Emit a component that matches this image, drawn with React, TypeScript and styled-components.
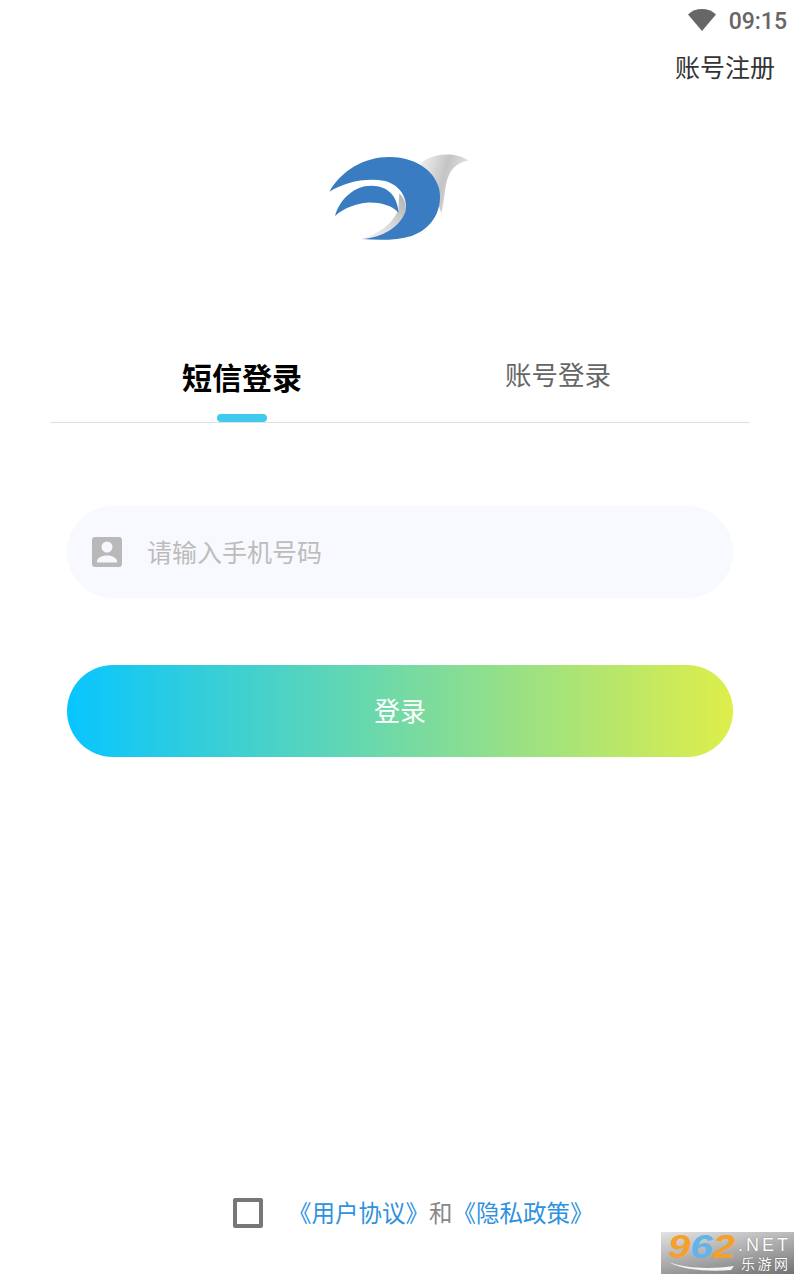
import React from "react"
import styled, { createGlobalStyle } from "styled-components"

const GlobalStyle = createGlobalStyle`
	html, body {
		margin: 0;
		padding: 0;
		background: #fff;
	}
	body {
		font-family: "Noto Sans CJK SC", "Noto Sans", sans-serif;
	}
`

const App = () => {
	return (
		<Page>
			<GlobalStyle />
			<StatusBar>
				<svg width="30" height="24" viewBox="0 0 30 24">
					<path d="M1 6.500C5 2.800 9.800 1 15 1s10 1.800 14 5.500L15 23z" fill="#666" />
				</svg>
				<Clock>09:15</Clock>
			</StatusBar>
			<TopAction>
				<RegisterLink>账号注册</RegisterLink>
			</TopAction>
			<LogoRow>
				<svg width="200" height="130" viewBox="0 0 600 390">
					<defs>
						<linearGradient id="wing" x1="0" y1="0" x2="1" y2="0.35">
							<stop offset="0" stopColor="#f2f2f2" />
							<stop offset="0.55" stopColor="#c4c4c4" />
							<stop offset="1" stopColor="#e8e8e8" />
						</linearGradient>
						<linearGradient id="fold" x1="1" y1="0" x2="0" y2="1">
							<stop offset="0" stopColor="#b0b0b0" />
							<stop offset="0.5" stopColor="#d8d8d8" />
							<stop offset="1" stopColor="#f4f4f4" />
						</linearGradient>
					</defs>
					<path d="M362 100C395 72 460 62 506 92C470 96 447 118 438 165C432 200 430 225 424 250L400 180z" fill="url(#wing)" />
					<path d="M298 190C325 215 322 260 296 288C265 318 225 328 185 327C235 312 275 285 295 240z" fill="url(#fold)" />
					<path d="M88 185C125 120 195 80 270 81C340 82 400 115 417 175C430 235 400 295 335 318C290 332 235 331 185 327C250 322 300 290 316 245C325 205 300 165 255 153C195 142 135 157 88 185z" fill="#3a7cc1" />
					<path d="M105 258C120 205 165 166 215 167C262 168 292 195 296 248C275 225 235 216 200 218C165 221 130 235 105 258z" fill="#3a7cc1" />
				</svg>
			</LogoRow>
			<Tabs>
				<Tab $active>
					短信登录
					<TabMarker />
				</Tab>
				<Tab>账号登录</Tab>
			</Tabs>
			<Form>
				<PhoneField>
					<svg width="30" height="30" viewBox="0 0 30 30">
						<rect width="30" height="30" rx="3" fill="#b9b9b9" />
						<circle cx="15" cy="10" r="5.500" fill="#f7f8fd" />
						<path d="M5 25.500V24c0-3.500 6-5.500 10-5.500s10 2 10 5.500v1.500z" fill="#f7f8fd" />
					</svg>
					<PhoneInput placeholder="请输入手机号码" />
				</PhoneField>
				<LoginButton>登录</LoginButton>
			</Form>
			<Agreement>
				<CheckBox />
				<AgreementText>
					<AgreementLink>《用户协议》</AgreementLink>和<AgreementLink>《隐私政策》</AgreementLink>
				</AgreementText>
			</Agreement>
			<Watermark>
				<WatermarkBrand>
					<WatermarkDigits>
						<WatermarkDigit>9</WatermarkDigit>
						<WatermarkDigit $blue>6</WatermarkDigit>
						<WatermarkDigit>2</WatermarkDigit>
					</WatermarkDigits>
					<svg width="70" height="10" viewBox="0 0 70 10">
						<path d="M1 1C18 8 45 8 66 5l-3 4C42 11 14 9 1 1z" fill="#f4f4f4" />
					</svg>
				</WatermarkBrand>
				<WatermarkSide>
					<WatermarkNet>.NET</WatermarkNet>
					<WatermarkName>乐游网</WatermarkName>
				</WatermarkSide>
			</Watermark>
		</Page>
	)
}

export default App

const Page = styled.div`
	position: relative;
	width: 800px;
	height: 1280px;
	overflow: hidden;
	background: #fff;
`

const StatusBar = styled.div`
	display: flex;
	justify-content: flex-end;
	align-items: center;
	gap: 12px;
	height: 40px;
	padding-right: 13px;
	color: #666;
`

const Clock = styled.span`
	margin-top: 3px;
	font-family: Roboto, sans-serif;
	font-size: 23px;
	font-weight: 500;
	line-height: 37px;
`

const TopAction = styled.div`
	display: flex;
	justify-content: flex-end;
	height: 56px;
	padding-right: 25px;
`

const RegisterLink = styled.span`
	font-size: 25px;
	line-height: 52px;
	color: #333;
`

const LogoRow = styled.div`
	display: flex;
	justify-content: center;
	height: 254px;
	padding-top: 34px;
	box-sizing: border-box;
`

const Tabs = styled.div`
	display: grid;
	grid-template-columns: 384px 248px;
	height: 72px;
	margin: 0 50px;
	border-bottom: 1px solid #e0e0e0;
`

const Tab = styled.div<{ $active?: boolean }>`
	position: relative;
	justify-self: center;
	font-size: ${({ $active }) => ($active ? 30 : 26.5)}px;
	font-weight: ${({ $active }) => ($active ? 700 : 400)};
	line-height: ${({ $active }) => ($active ? 52 : 48)}px;
	color: ${({ $active }) => ($active ? "#000" : "#666")};
`

const TabMarker = styled.div`
	position: absolute;
	left: 35px;
	bottom: 0;
	width: 50px;
	height: 8px;
	border-radius: 4px;
	background: #3fcbee;
`

const Form = styled.div`
	display: flex;
	flex-direction: column;
	gap: 67px;
	margin: 83px 67px 0;
`

const PhoneField = styled.div`
	display: flex;
	align-items: center;
	gap: 25px;
	height: 92px;
	padding-left: 25px;
	border-radius: 46px;
	background: #f8f9fe;
`

const PhoneInput = styled.input`
	flex: 1;
	min-width: 0;
	border: 0;
	outline: 0;
	padding: 0 0 3px;
	background: transparent;
	font-family: inherit;
	font-size: 25px;
	color: #333;

	&::placeholder {
		color: #bcbcbc;
		opacity: 1;
	}
`

const LoginButton = styled.div`
	display: flex;
	justify-content: center;
	align-items: center;
	height: 92px;
	padding-bottom: 4px;
	box-sizing: border-box;
	border-radius: 46px;
	background: linear-gradient(90deg, #08c5ff 0%, #deee4a 100%);
	font-size: 26px;
	color: #fff;
`

const Agreement = styled.div`
	position: absolute;
	left: 233px;
	top: 1198px;
	display: flex;
	align-items: center;
	gap: 25px;
`

const CheckBox = styled.div`
	width: 30px;
	height: 30px;
	box-sizing: border-box;
	border: 4px solid #777;
	border-radius: 2px;
`

const AgreementText = styled.div`
	margin-top: -2px;
	font-size: 23.5px;
	line-height: 30px;
	color: #888;
	white-space: nowrap;
`

const AgreementLink = styled.span`
	color: #2f92e0;
`

const Watermark = styled.div`
	position: absolute;
	left: 661px;
	top: 1232px;
	display: flex;
	width: 133px;
	height: 42px;
	padding-left: 7px;
	box-sizing: border-box;
	background: linear-gradient(170deg, #e2e2e2 0%, #a6a6a6 55%, #727272 100%);
`

const WatermarkBrand = styled.div`
	display: flex;
	flex-direction: column;
	width: 72px;

	svg {
		margin-top: 1px;
	}
`

const WatermarkDigits = styled.div`
	display: flex;
	height: 28px;
	transform: scaleX(1.18);
	transform-origin: left;
	font-family: "Liberation Sans", sans-serif;
	font-size: 34px;
	font-weight: 700;
	font-style: italic;
	line-height: 28px;
`

const WatermarkDigit = styled.span<{ $blue?: boolean }>`
	color: ${({ $blue }) => ($blue ? "#62b3e8" : "#f59f2c")};
`

const WatermarkSide = styled.div`
	display: flex;
	flex-direction: column;
	align-items: flex-start;
	padding-top: 3px;
`

const WatermarkNet = styled.div`
	margin-left: -2px;
	font-family: "Liberation Sans", sans-serif;
	font-size: 18px;
	line-height: 20px;
	letter-spacing: 3px;
	color: #fff;
	text-shadow: 0 0 1px #666;
`

const WatermarkName = styled.div`
	margin-left: 1px;
	font-size: 14px;
	line-height: 17px;
	letter-spacing: 2.500px;
	white-space: nowrap;
	color: #fff;
	text-shadow: 0 0 1px #555;
`
